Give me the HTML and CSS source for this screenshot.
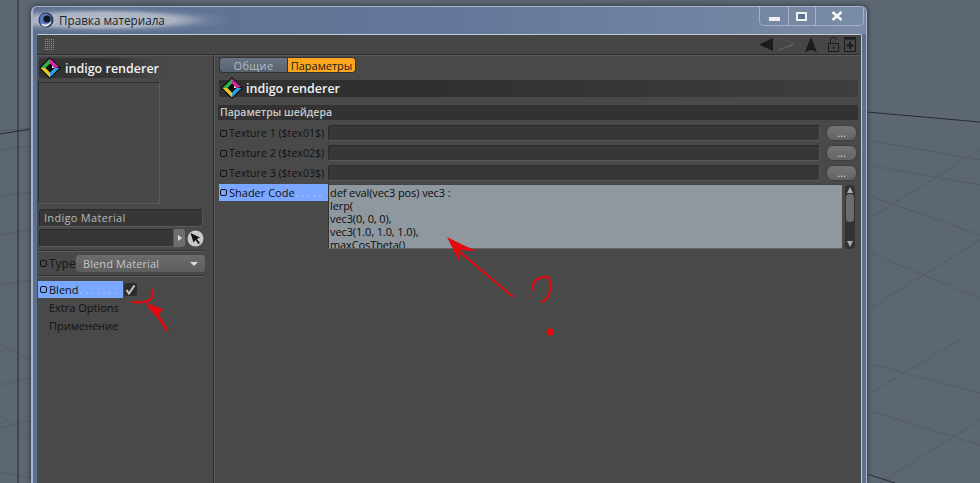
FILE: index.html
```html
<!DOCTYPE html>
<html lang="ru">
<head>
<meta charset="utf-8">
<title>Правка материала</title>
<link rel="stylesheet" href="styles.css">
</head>
<body>
<svg class="scene" width="980" height="483" viewBox="0 0 980 483">
  <g class="grid">
    <path d="M0 131 L31 128"/><path d="M0 150 L31 146"/><path d="M0 196 L31 192"/>
    <path d="M0 235 L31 230"/><path d="M0 285 L31 280"/><path d="M0 385 L31 378"/><path d="M0 428 L31 420"/>
    <path d="M0 472 L31 478"/><path d="M0 345 L31 360"/><path d="M0 415 L31 440"/>
    <path d="M867 140 L980 160"/><path d="M867 165 L980 185"/><path d="M867 195 L980 235"/>
    <path d="M867 252 L980 298"/><path d="M867 363 L980 393"/><path d="M867 410 L980 445"/>
    <path d="M867 395 L960 340"/><path d="M880 483 L980 420"/><path d="M867 220 L980 150"/><path d="M867 310 L980 240"/>
  </g>
  <path class="axis" d="M0 134 L31 129"/>
  <path class="axis" d="M867 112 L980 122"/>
  <path class="axis" d="M18 0 V483"/>
  <path class="axis" d="M867 474 L895 483"/>
</svg>

<div class="window">
  <div class="titlebar">
    <div class="title-glow">
      <svg class="app-icon" width="16" height="16" viewBox="0 0 16 16"><circle cx="8" cy="8" r="7.500" fill="#28314f"/><circle cx="7.500" cy="7.500" r="6" fill="#5c76bd"/><circle cx="9" cy="7" r="3.600" fill="#12151d"/><path d="M2.500 10.500 C5 13.500 10 13.500 13.500 9 C13 13 9 15 6 14.500 C4.500 14 3 12.500 2.500 10.500 Z" fill="#f2f4f8"/></svg>
      <span class="title-text">Правка материала</span>
    </div>
    <div class="controls">
      <div class="ctl ctl-min"><span class="min-glyph"></span></div>
      <div class="ctl ctl-max"><span class="max-glyph"></span></div>
      <div class="ctl ctl-close"><svg width="12" height="10" viewBox="0 0 12 10"><path d="M1.500 1 L10.500 9 M10.500 1 L1.500 9" stroke="#f4f4f4" stroke-width="2.600"/></svg></div>
    </div>
  </div>

  <div class="panel">
    <div class="toolbar">
      <div class="grip"></div>
      <div class="tools">
        <svg class="tool-nav" width="38" height="15" viewBox="0 0 38 15"><path d="M0 7.500 L14 1 V14 Z" fill="#1c1c1c"/><path d="M19 14 L35 6 L19 1" fill="none" stroke="#525252"/><path d="M20 13 L35 7" stroke="#5a5a5a" stroke-width="2"/></svg>
        <svg class="tool-up" width="12" height="15" viewBox="0 0 12 15"><path d="M6 0 L12 15 L6 13 L0 15 Z" fill="#1c1c1c"/></svg>
        <svg class="tool-lock" width="11" height="15" viewBox="0 0 11 15"><rect x="0.500" y="6.500" width="10" height="8" fill="none" stroke="#1c1c1c"/><path d="M2.500 6 V3.500 a3 3 0 0 1 6 -0.500" fill="none" stroke="#1c1c1c"/><rect x="5" y="9.500" width="1.500" height="2.500" fill="#1c1c1c"/></svg>
        <svg class="tool-book" width="12" height="15" viewBox="0 0 12 15"><rect x="0.500" y="0.500" width="11" height="14" fill="none" stroke="#1c1c1c"/><rect x="0" y="0" width="12" height="2.500" fill="#1c1c1c"/><path d="M6 5 V12 M2.500 8.500 H9.500" stroke="#1c1c1c" stroke-width="2"/></svg>
      </div>
    </div>

    <div class="columns">
      <aside class="left">
        <div class="brand brand-left">
          <svg class="logo" width="22" height="22" viewBox="0 0 22 22"><polygon points="11,0 22,11 11,22 0,11" fill="#0a0a0a"/><polygon points="11,1.500 20,10 15.500,11 11,6.500" fill="#d02a9c"/><polygon points="20.500,11 11,20.500 11,15.500 15.500,11" fill="#2f9fe0"/><polygon points="11,20.500 1.500,11 6.500,11 11,15.500" fill="#e8c72c"/><polygon points="1.500,11 11,1.500 11,6.500 6.500,11" fill="#2fb24a"/><polygon points="15.500,11 13,8.500 13,11" fill="#eee"/></svg>
          <span class="brand-text">indigo renderer</span>
        </div>
        <div class="preview"></div>
        <div class="field name-field">Indigo Material</div>
        <div class="link-row">
          <div class="field link-field"></div>
          <div class="link-arrow"></div>
          <svg class="picker" width="17" height="17" viewBox="0 0 17 17"><circle cx="8.500" cy="8.500" r="8" fill="#c9c9c9"/><path d="M3.500 3 L13 7.500 L9.800 9 L13 13 L11.500 14 L8.500 10 L6.500 12.500 Z" fill="#111"/></svg>
        </div>
        <div class="separator"></div>
        <div class="type-row">
          <span class="dot"></span><span class="type-label">Type</span>
          <div class="select"><span>Blend Material</span><span class="caret"></span></div>
        </div>
        <div class="separator"></div>
        <div class="blend-row">
          <div class="nav-active"><span class="dot"></span><span>Blend</span><span class="leader">. . . . . . .</span></div>
          <div class="check"><svg width="11" height="11" viewBox="0 0 11 11"><path d="M1.500 6 L4 9.500 L9.500 1.500" fill="none" stroke="#c8c8c8" stroke-width="2"/></svg></div>
        </div>
        <div class="nav-item nav-extra">Extra Options</div>
        <div class="nav-item">Применение</div>
      </aside>

      <main class="right">
        <div class="tabs">
          <div class="tab">Общие</div>
          <div class="tab tab-on">Параметры</div>
        </div>
        <div class="brand brand-right">
          <svg class="logo" width="22" height="22" viewBox="0 0 22 22"><polygon points="11,0 22,11 11,22 0,11" fill="#0a0a0a"/><polygon points="11,1.500 20,10 15.500,11 11,6.500" fill="#d02a9c"/><polygon points="20.500,11 11,20.500 11,15.500 15.500,11" fill="#2f9fe0"/><polygon points="11,20.500 1.500,11 6.500,11 11,15.500" fill="#e8c72c"/><polygon points="1.500,11 11,1.500 11,6.500 6.500,11" fill="#2fb24a"/><polygon points="15.500,11 13,8.500 13,11" fill="#eee"/></svg>
          <span class="brand-text">indigo renderer</span>
        </div>
        <div class="section">Параметры шейдера</div>
        <div class="row"><div class="label"><span class="dot"></span>Texture 1 ($tex01$)</div><div class="field tex-field"></div><div class="btn">...</div></div>
        <div class="row"><div class="label"><span class="dot"></span>Texture 2 ($tex02$)</div><div class="field tex-field"></div><div class="btn">...</div></div>
        <div class="row"><div class="label"><span class="dot"></span>Texture 3 ($tex03$)</div><div class="field tex-field"></div><div class="btn">...</div></div>
        <div class="code-row">
          <div class="label label-active"><span class="dot"></span>Shader Code<span class="leader">. . . . .</span></div>
          <div class="code">def eval(vec3 pos) vec3 :<br>lerp(<br>vec3(0, 0, 0),<br>vec3(1.0, 1.0, 1.0),<br>maxCosTheta()</div>
          <div class="scrollbar"><span class="sb-up"></span><span class="sb-thumb"></span><span class="sb-down"></span></div>
        </div>
      </main>
    </div>
  </div>
</div>

<svg class="marks" width="980" height="483" viewBox="0 0 980 483">
  <polygon class="ink-fill" points="447,237 460,263 458,250 477,251 463,245"/>
  <polygon class="ink-fill" points="146,303 163,309 157,317 151,311"/>
  <g class="ink">
    <path d="M455 248 L512 296"/>
    <path d="M533 290 C531 282 538 276 548 277 C552 285 551 298 542 302"/>
    <path d="M132 302 C140 303 150 303 153 296 L153 290"/>
    <path class="ink-thick" d="M152 307 L167 330"/>
  </g>
  <circle class="ink-dot" cx="550" cy="332" r="3.500"/>
</svg>
</body>
</html>
```
FILE: styles.css
```css
* { box-sizing: border-box; }
html, body { margin: 0; height: 483px; overflow: hidden; }
body {
  background: #5d6772;
  font-family: "Open Sans", "Liberation Sans", sans-serif;
  font-size: 11px;
  color: #111;
  padding: 6px 113px 0 31px;
}
.scene, .marks { position: absolute; left: 0; top: 0; }
.marks { pointer-events: none; }
.grid path { stroke: #525c68; stroke-width: 1; fill: none; }
.axis { stroke: #252b33; stroke-width: 1; fill: none; }
.ink path { stroke: #e8090f; stroke-width: 2; fill: none; stroke-linecap: round; }
.ink .ink-thick { stroke-width: 2.500; }
.ink-dot, .ink-fill { fill: #e8090f; }

.window {
  position: relative;
  width: 836px;
  height: 477px;
  background: #5d7090;
  border-radius: 6px 6px 0 0;
  border: 1px solid #a9b5c6;
  border-bottom: 0;
  border-left-width: 2px;
  box-shadow: 0 0 5px 1px #39404a;
  padding: 0 4px;
}
.titlebar {
  height: 27px;
  display: flex;
  justify-content: space-between;
  background: linear-gradient(90deg, #5d7090 0, #64779a 50%, #7a8ba5 100%);
  margin: 0 -4px;
  padding-right: 2px;
  border-radius: 5px 5px 0 0;
}
.title-glow {
  display: flex;
  align-items: center;
  gap: 5px;
  width: 200px;
  height: 26px;
  padding-left: 5px;
  background: radial-gradient(ellipse farthest-side at 35% 50%, #b5bdc9 0, #aab3c2 55%, rgba(125,140,165,0.5) 80%, rgba(110,125,150,0) 100%);
}
.app-icon { flex: none; }
.title-text { font-size: 11.700px; color: #1f2329; }
.controls { display: flex; height: 19px; border: 1px solid #a5b1c4; border-top: 0; border-radius: 0 0 5px 5px; }
.ctl { display: flex; align-items: center; justify-content: center; height: 18px; }
.ctl-min { width: 29px; border-right: 1px solid #a5b1c4; }
.ctl-max { width: 27px; border-right: 1px solid #a5b1c4; }
.ctl-close { width: 47px; padding-right: 5px; }
.min-glyph { width: 11px; height: 4px; background: #eee; margin-top: 5px; }
.max-glyph { width: 11px; height: 9px; border: 2px solid #eee; background: #5f7191; margin-right: 2px; }

.panel {
  height: 450px;
  background: #494949;
  border-radius: 2px 2px 0 0;
  border-top: 1px solid #c2cad6;
  border-right: 1px solid #c2cad6;
}
.toolbar {
  height: 20px;
  display: flex;
  align-items: center;
  justify-content: space-between;
  background: #464646;
  border-bottom: 1px solid #2f2f2f;
  box-shadow: 0 1px 0 #5a5a5a;
  padding: 0 5px 0 7px;
}
.grip {
  width: 11px;
  height: 11px;
  background-image: conic-gradient(#8c8c8c 25%, #484848 0);
  background-size: 2px 2px;
}
.tools { display: flex; align-items: center; }
.tool-nav { margin-right: 8px; }
.tool-up { margin-right: 11px; }
.tool-lock { margin-right: 5px; }

.columns { display: flex; height: 429px; }
.left {
  width: 177px;
  flex: none;
  border-right: 1px solid #2e2e2e;
  box-shadow: 1px 0 0 #5c5c5c;
  padding: 3px 9px 0 1px;
}
.right { flex: 1; padding: 2px 3px 0 5px; }

.brand { display: flex; align-items: center; height: 22px; }
.brand-text { font-size: 12.500px; font-weight: 600; color: #f1f1f1; margin-left: 4px; white-space: nowrap; }
.logo { flex: none; }
.brand-left { background: linear-gradient(90deg, #333 0, #333 55%, #494949 100%); height: 20px; width: 122px; margin-left: 1px; }
.preview { width: 122px; height: 122px; border: 1px solid #303030; border-right-color: #5a5a5a; border-bottom-color: #5a5a5a; margin-top: 4px; background: #484848; }

.field {
  background: #373737;
  border: 1px solid #2a2a2a;
  border-right-color: #555;
  border-bottom-color: #5a5a5a;
  border-radius: 3px;
}
.name-field { margin: 5px 0 0 1px; height: 18px; width: 164px; padding-left: 4px; letter-spacing: 0.3px; line-height: 15px; color: #b8b8b8; }
.link-row { display: flex; align-items: center; margin: 2px 0 0 1px; height: 18px; }
.link-field { width: 136px; height: 18px; }
.link-arrow { width: 11px; height: 18px; margin-right: 2px; background: #6e6e6e; border-radius: 0 3px 3px 0; position: relative; }
.link-arrow::after { content: ""; position: absolute; left: 4px; top: 6px; border-left: 4px solid #ddd; border-top: 3px solid transparent; border-bottom: 3px solid transparent; }
.picker { flex: none; }
.separator { margin-top: 3px; height: 2px; width: 167px; border-top: 1px solid #333; border-bottom: 1px solid #5c5c5c; }

.dot { display: inline-block; flex: none; width: 7px; height: 7px; border: 1px solid #111; border-radius: 2px; margin-right: 2px; }
.type-row { display: flex; align-items: center; height: 17px; margin: 3px 0 0 2px; }
.type-label { font-size: 12px; color: #151515; width: 27px; }
.select { flex: 1; margin-right: -1px; height: 17px; background: linear-gradient(#6c6c6c, #5d5d5d); border-radius: 4px; color: #c5c5c5; display: flex; align-items: center; justify-content: space-between; padding: 0 7px; letter-spacing: 0.1px; }
.caret { border-top: 4px solid #ddd; border-left: 4px solid transparent; border-right: 4px solid transparent; }

.blend-row { display: flex; align-items: center; margin-top: 4px; height: 17px; }
.nav-active { display: flex; align-items: center; width: 85px; height: 17px; background: #7aa7ff; padding-left: 2px; color: #111; white-space: nowrap; overflow: hidden; }
.leader { color: #b7cff8; margin-left: 1px; }
.check { width: 13px; height: 13px; margin-left: 1px; background: #2c2c2c; border-radius: 3px; display: flex; align-items: center; justify-content: center; }
.nav-item { margin-left: 11px; height: 18px; line-height: 18px; color: #111; }
.nav-extra { margin-top: 1px; }

.tabs { display: flex; height: 16px; }
.tab { display: flex; align-items: center; justify-content: center; width: 69px; background: linear-gradient(#6a7482, #586270); border: 1px solid #333; border-radius: 4px 0 0 4px; color: #b9bdc2; letter-spacing: 0.4px; }
.tab-on { width: 68px; background: #fba61d; color: #1a1a1a; border-radius: 0 4px 4px 0; border-left: 0; letter-spacing: 0; }
.brand-right { height: 17px; margin-top: 7px; background: linear-gradient(90deg, #313131 0, #2e2e2e 25%, #3e3e3e 100%); }
.brand-right .logo { margin-left: 2px; margin-top: -1px; }
.brand-right .brand-text { margin-left: 3px; }
.section { height: 15px; line-height: 15px; margin: 8px 0 0 -1px; background: #323232; color: #c9c9c9; font-weight: 600; font-size: 10.500px; padding-left: 2px; }
.row { display: flex; align-items: center; height: 16px; margin-top: 4px; }
.row:nth-of-type(4) { margin-top: 5px; }
.label { display: flex; align-items: center; width: 109px; padding-left: 1px; white-space: nowrap; color: #111; flex: none; }
.row .label { font-size: 10.600px; }
.tex-field { width: 492px; height: 16px; }
.btn { width: 31px; height: 16px; margin-left: 6px; background: linear-gradient(#757575, #646464); border-radius: 7px; border: 1px solid #3e3e3e; text-align: center; line-height: 13px; color: #ddd; }
.code-row { display: flex; align-items: flex-start; margin-top: 3px; }
.label-active { background: #7aa7ff; height: 17px; overflow: hidden; }
.code { width: 514px; height: 65px; overflow: hidden; background: #8f989f; border-left: 1px solid #333; border-top: 1px solid #444; border-bottom: 1px solid #666; padding: 1px 0 0 1px; line-height: 13px; letter-spacing: -0.1px; color: #0c0c0c; }
.scrollbar { width: 10px; height: 64px; margin: 1px 0 0 3px; background: #333; border-radius: 4px; display: flex; flex-direction: column; align-items: center; justify-content: space-between; padding: 2px 0; }
.sb-up { border-bottom: 6px solid #aaa; border-left: 3px solid transparent; border-right: 3px solid transparent; }
.sb-thumb { width: 8px; height: 28px; margin: 1px 0 auto; background: #6c6c6c; border-radius: 4px; }
.sb-down { border-top: 6px solid #aaa; border-left: 3px solid transparent; border-right: 3px solid transparent; }
```
